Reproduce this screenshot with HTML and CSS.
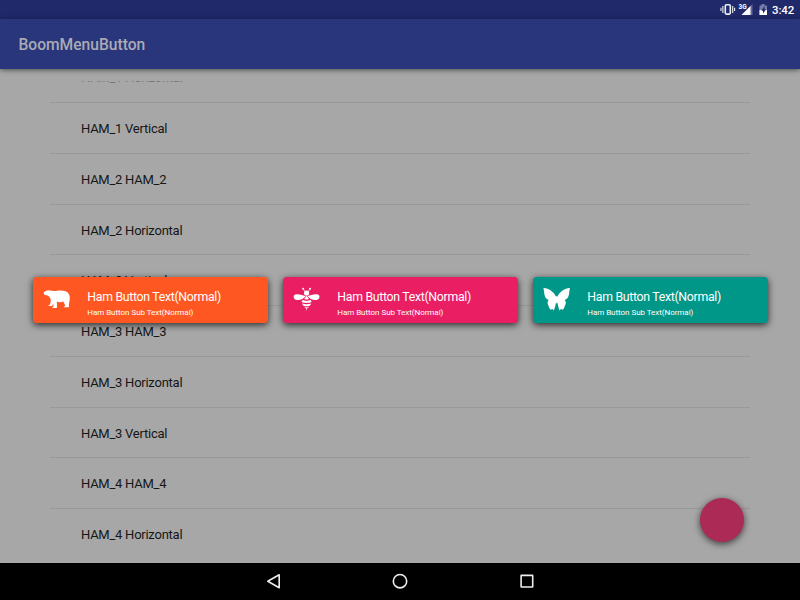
FILE: index.html
```html
<!DOCTYPE html>
<html lang="en">
<head>
<meta charset="utf-8">
<title>BoomMenuButton</title>
<link rel="stylesheet" href="styles.css">
</head>
<body>
<div class="screen">
  <div class="status">
    <svg class="status-icons" width="52" height="18" viewBox="0 0 52 18">
      <g fill="none" stroke="#eceef5"><rect x="5.300" y="4.700" width="5" height="9.400" rx="1" stroke-width="1.600"/><path d="M2.900 6v7M12.700 6v7M1 7.800v3.200M14.600 7.800v3.200" stroke-width="1.100"/></g>
      <text class="net" x="18.500" y="8.500">3G</text>
      <path d="M32.500 4v11H21.500z" fill="#646b99"/><path d="M30.500 6v9h-9z" fill="#fff"/>
      <path d="M39.500 5.500h2V4h3v1.500h2.500V15h-7.500z" fill="#777da8"/><path d="M39.500 10h7.500v5h-7.500z" fill="#fff"/><path d="M44.500 6l-3.200 4.800h1.700V13.500l3-4.100h-1.500z" fill="#20296a"/>
    </svg>
    <span class="time">3:42</span>
  </div>
  <header class="appbar">BoomMenuButton</header>
  <main class="content">
    <ul class="list">
      <li>HAM_1 Horizontal</li>
      <li>HAM_1 Vertical</li>
      <li>HAM_2 HAM_2</li>
      <li>HAM_2 Horizontal</li>
      <li>HAM_2 Vertical</li>
      <li>HAM_3 HAM_3</li>
      <li>HAM_3 Horizontal</li>
      <li>HAM_3 Vertical</li>
      <li>HAM_4 HAM_4</li>
      <li>HAM_4 Horizontal</li>
    </ul>
  </main>
  <nav class="navbar">
    <svg width="20" height="20" viewBox="0 0 20 20"><path d="M15.200 3.800v13L3.800 10.300z"/></svg>
    <svg width="20" height="20" viewBox="0 0 20 20"><circle cx="10" cy="10.200" r="6.700"/></svg>
    <svg width="20" height="20" viewBox="0 0 20 20"><rect x="4.100" y="4.400" width="11.600" height="11.600" rx=".3"/></svg>
  </nav>
  <div class="fab"></div>
  <div class="boom">
    <div class="ham orange">
      <svg width="28" height="28" viewBox="0 0 28 28"><path d="M.6 6.500C1.400 5.600 2.500 5.300 3.500 4.800C4.200 4 5.500 3.900 6.200 4.600C8.700 4.800 11 5.300 13.200 4.900C16.200 4.200 20 4.500 22.600 5.300C25.500 6.300 27 9.300 26.800 12.500C26.700 15.200 25.600 17.400 26 21.300H20.800C20.700 20.600 21.500 20.200 22.200 20.100C21.700 18.200 21.200 16.900 20.200 15.500C18.200 16.500 15.500 16.300 13.800 15.600C13.900 18 14.200 20.200 13.800 21.900H9.300C9.200 20.900 10 20.500 10.700 20.400L10.200 17.900L9 20H5.600C5.500 19.100 6.100 18.600 7 18.400C7.700 16.600 8 14.600 7.400 12.500C6.500 10.800 5.600 10 4.500 9.600C3.100 9.300 1.800 9 .7 8.300C1.300 7.800 1 7.200.6 6.500z"/></svg>
      <div class="label"><b>Ham Button Text(Normal)</b><small>Ham Button Sub Text(Normal)</small></div>
    </div>
    <div class="ham pink">
      <svg width="28" height="28" viewBox="0 0 28 28"><circle cx="10.200" cy="2.800" r="1"/><circle cx="17" cy="2.800" r="1"/><path d="M10.400 3.200l1.800 2.700M16.800 3.200l-1.800 2.700" stroke="#fff" stroke-width=".7"/><circle cx="13.600" cy="7" r="2.600"/><path d="M12.700 10.200C9.500 9 5.500 7.600 2.400 8.400C.2 9 .1 12.200 2.300 13.400C5.700 15 10.200 13.400 12.700 10.200zM14.500 10.200C17.700 9 21.700 7.600 24.800 8.400C27 9 27.100 12.200 24.900 13.400C21.500 15 17 13.400 14.500 10.200z"/><path d="M13.600 9.700l2.300 3.400q-2.300 1-4.600 0zM9.600 14.100q4 1.600 8 0q1.200 1.200.8 2.200q-4.800 1.600-9.600 0q-.4-1 .8-2.200zM9.200 17.600q4.400 1.500 8.800 0q-.2 1.500-1.300 2.200q-3.100 1-6.200 0q-1.100-.7-1.300-2.200zM11.200 21.100q2.400.6 4.800 0q-.7 1-1.800 1.200l-.6 2.400-.6-2.400q-1.100-.2-1.800-1.200z"/></svg>
      <div class="label"><b>Ham Button Text(Normal)</b><small>Ham Button Sub Text(Normal)</small></div>
    </div>
    <div class="ham teal">
      <svg width="28" height="28" viewBox="0 0 28 28"><path d="M13.100 10.700C10.300 5.600 5.900 2.200.7 2.100C.1 3.200 1.100 4.200 1.100 5.500C1.300 9 1.800 12.300 5.600 13.900C4 15.800 4.500 18 5.500 19.600C5.700 21.200 6.500 22.400 7.600 23.800L9.600 23.100L10.700 24.600C12 22.200 12.500 18.800 13 16.500L13.700 17.800L14.400 16.500C14.900 18.800 15.400 22.200 16.700 24.600L17.800 23.100L19.800 23.800C20.900 22.400 21.700 21.200 21.900 19.600C22.900 18 23.400 15.800 21.800 13.900C25.600 12.300 26.100 9 26.300 5.500C26.300 4.200 27.300 3.200 26.700 2.100C21.500 2.200 17.100 5.600 14.300 10.700L13.700 9.800z"/></svg>
      <div class="label"><b>Ham Button Text(Normal)</b><small>Ham Button Sub Text(Normal)</small></div>
    </div>
  </div>
</div>
</body>
</html>
```
FILE: styles.css
```css
* { box-sizing: border-box; }
body { margin: 0; font-family: Roboto, sans-serif; }
.screen {
  position: relative;
  width: 800px;
  height: 600px;
  overflow: hidden;
  display: flex;
  flex-direction: column;
  background: #a7a7a7;
}
.status {
  height: 19px;
  flex: none;
  display: flex;
  justify-content: flex-end;
  padding-right: 6px;
  background: #20296a;
  color: #fff;
}
.net { font-size: 6.500px; font-weight: 700; fill: #fff; }
.time { width: 22px; font-size: 11.500px; line-height: 20px; font-weight: 500; letter-spacing: -.1px; white-space: nowrap; }
.appbar {
  position: relative;
  height: 50px;
  flex: none;
  padding-left: 18.500px;
  background: #2a367b;
  color: #a9abb5;
  font-size: 15.600px;
  font-weight: 500;
  line-height: 52px;
  box-shadow: 0 1px 5px rgba(0, 0, 0, .55);
}
.content { flex: 1; margin: 12px 50px 0; overflow: hidden; }
.list { list-style: none; margin: -28.900px 0 0; padding: 0; }
.list li {
  height: 50.800px;
  padding-left: 31px;
  border-bottom: 1px solid #999;
  color: #161616;
  font-size: 13px;
  letter-spacing: -.25px;
  line-height: 51.600px;
}
.list li:first-child { color: #777; }
.list li:last-child { border-bottom: 0; }
.navbar {
  height: 37.500px;
  flex: none;
  display: flex;
  justify-content: center;
  align-items: center;
  gap: 106.500px;
  background: #000;
}
.navbar svg { fill: none; stroke: #eee; stroke-width: 1.600; stroke-linejoin: round; }
.fab {
  position: absolute;
  left: 700px;
  top: 497.500px;
  width: 43.500px;
  height: 44px;
  border-radius: 50%;
  background: #ab2b56;
  box-shadow: 0 2px 7px rgba(0, 0, 0, .65);
}
.boom {
  position: absolute;
  top: 276.700px;
  left: 32.800px;
  display: grid;
  grid-template-columns: repeat(3, 235px);
  gap: 15px;
}
.ham {
  height: 46.500px;
  display: flex;
  padding: 9.300px 0 0 10.200px;
  border-radius: 4px;
  color: #fff;
  box-shadow: 0 2px 7px rgba(0, 0, 0, .75);
}
.ham svg { flex: none; fill: #fff; }
.orange { background: #ff5722; }
.pink { background: #e91e63; }
.teal { background: #009688; }
.label { margin: 3.300px 0 0 16.300px; display: flex; flex-direction: column; white-space: nowrap; }
.label b { font-size: 12.300px; line-height: 17px; font-weight: 400; letter-spacing: -.3px; }
.label small { font-size: 8px; line-height: 14px; letter-spacing: -.04px; }
```
